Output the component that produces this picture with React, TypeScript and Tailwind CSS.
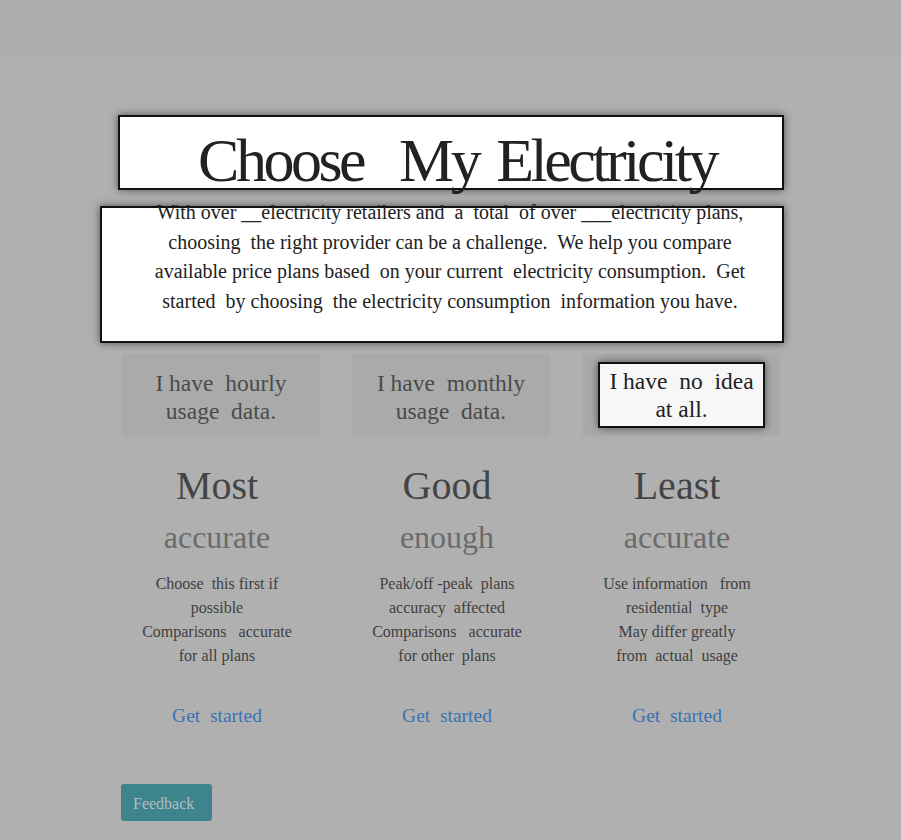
import React from "react";

interface Option {
  tile: string[];
  head: string;
  sub: string;
  lines: string[];
  active?: boolean;
}

const options: Option[] = [
  {
    tile: ["I have  hourly", "usage  data."],
    head: "Most",
    sub: "accurate",
    lines: ["Choose  this first if", "possible", "Comparisons   accurate", "for all plans"],
  },
  {
    tile: ["I have  monthly", "usage  data."],
    head: "Good",
    sub: "enough",
    lines: ["Peak/off -peak  plans", "accuracy  affected", "Comparisons   accurate", "for other  plans"],
  },
  {
    tile: ["I have  no  idea", "at all."],
    head: "Least",
    sub: "accurate",
    lines: ["Use information   from", "residential  type", "May differ greatly", "from  actual  usage"],
    active: true,
  },
];

export default function App() {
  return (
    <div className="min-h-[840px] bg-[#b0b0b0] whitespace-pre font-['Liberation_Serif','Times_New_Roman',serif]">
      {/* Top bar */}
      <div className="h-[57px] bg-[#adafad]" />

      <div className="w-[901px] pt-[58px]">
        {/* Title */}
        <div className="ml-[118px] w-[666px] h-[75px] bg-white border-2 border-[#111] shadow-[0_0_8px_rgba(0,0,0,0.55)] flex justify-center">
          <h1 className="text-[62px] leading-[90px] tracking-[-3.5px] text-[#222] [word-spacing:6px] -mt-[2px] pl-[12px]">
            Choose  My Electricity
          </h1>
        </div>

        {/* Description */}
        <div className="mt-[16px] ml-[100px] w-[684px] h-[137px] bg-white border-2 border-[#111] shadow-[0_0_8px_rgba(0,0,0,0.55)] pl-[16px]">
          <p className="-mt-[10px] text-center text-[20px] leading-[29.5px] text-[#222]">
            <span className="block">With over __electricity retailers and  a  total  of over ___electricity plans,</span>
            <span className="block">choosing  the right provider can be a challenge.  We help you compare</span>
            <span className="block">available price plans based  on your current  electricity consumption.  Get</span>
            <span className="block">started  by choosing  the electricity consumption  information you have.</span>
          </p>
        </div>

        {/* Options */}
        <div className="mt-[11px] ml-[102px] grid grid-cols-[230px_230px_230px]">
          {options.map((o, i) => (
            <div key={i} className="flex flex-col items-center">
              <div className="ml-[8px] w-[198px] h-[82px] bg-[#aaaaaa] flex flex-col items-center justify-center text-[23.5px] leading-[28px] text-[#4a4a4a] pt-[4px]">
                {o.active ? (
                  <div className="w-[167px] h-[66px] bg-[#f7f7f7] border-2 border-[#111] shadow-[0_0_8px_rgba(0,0,0,0.55)] flex flex-col items-center justify-center text-[#222] -mt-[4px] ml-[1px]">
                    {o.tile.map((t) => (
                      <span key={t}>{t}</span>
                    ))}
                  </div>
                ) : (
                  o.tile.map((t) => <span key={t}>{t}</span>)
                )}
              </div>

              <div className="mt-[26px] text-[40px] leading-[48px] text-[#444]">{o.head}</div>
              <div className="mt-[8px] text-[32px] leading-[38px] text-[#6b6b6b]">{o.sub}</div>

              <div className="mt-[16px] text-center text-[16px] leading-[24px] text-[#3f3f3f]">
                {o.lines.map((l) => (
                  <span key={l} className="block">
                    {l}
                  </span>
                ))}
              </div>

              <a className="mt-[34px] text-[19.5px] leading-[28px] text-[#3a72b6] cursor-pointer">Get  started</a>
            </div>
          ))}
        </div>

        {/* Feedback */}
        <div className="mt-[54px] ml-[121px]">
          <button className="w-[91px] h-[37px] rounded-[3px] bg-[#3e848c] text-[16px] text-[#b4bdbe] pt-[3px] pl-[12px] text-left">
            Feedback
          </button>
        </div>
      </div>
    </div>
  );
}
